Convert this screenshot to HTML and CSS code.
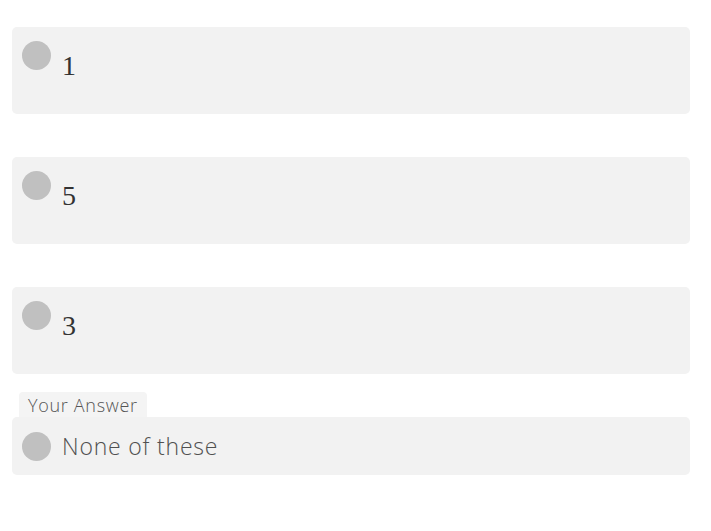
FILE: index.html
```html
<!DOCTYPE html>
<html>
<head>
<meta charset="utf-8">
<link rel="stylesheet" href="styles.css">
</head>
<body>
<div class="quiz">
  <div class="option">
    <span class="dot"></span>
    <span class="num">1</span>
  </div>
  <div class="option">
    <span class="dot"></span>
    <span class="num">5</span>
  </div>
  <div class="option">
    <span class="dot"></span>
    <span class="num">3</span>
  </div>
  <div class="answer">
    <div class="tab">Your Answer</div>
    <div class="option short">
      <span class="dot"></span>
      <span class="label">None of these</span>
    </div>
  </div>
</div>
</body>
</html>
```
FILE: styles.css
```css
html, body {
  margin: 0;
  padding: 0;
  background: #ffffff;
}
.quiz {
  display: flex;
  flex-direction: column;
  gap: 43px;
  padding: 27px 21px 0 12px;
}
.option {
  display: flex;
  align-items: flex-start;
  height: 87px;
  box-sizing: border-box;
  padding: 14px 10px 0 10px;
  background: #f2f2f2;
  border-radius: 5px;
}
.dot {
  flex: none;
  width: 29px;
  height: 29px;
  border-radius: 50%;
  background: #c0c0c0;
}
.num {
  margin-left: 11px;
  margin-top: 11px;
  font-family: "Liberation Serif", "DejaVu Serif", serif;
  font-size: 28px;
  line-height: 27px;
  color: #333333;
}
.answer {
  display: flex;
  flex-direction: column;
  align-items: flex-start;
  margin-top: -25px;
}
.tab {
  margin-left: 7px;
  height: 25px;
  box-sizing: border-box;
  padding: 2px 9px 0 9px;
  background: #f4f4f4;
  border-radius: 4px 4px 0 0;
  font-family: "Open Sans", "Noto Sans", sans-serif;
  font-weight: 300;
  font-size: 18px;
  letter-spacing: 0.7px;
  line-height: 22px;
  color: #555555;
}
.option.short {
  align-self: stretch;
  height: 58px;
  align-items: center;
  padding-top: 0;
}
.label {
  margin-left: 11px;
  font-family: "Open Sans", "Noto Sans", sans-serif;
  font-weight: 300;
  font-size: 23px;
  letter-spacing: 0.8px;
  color: #505050;
}
```
